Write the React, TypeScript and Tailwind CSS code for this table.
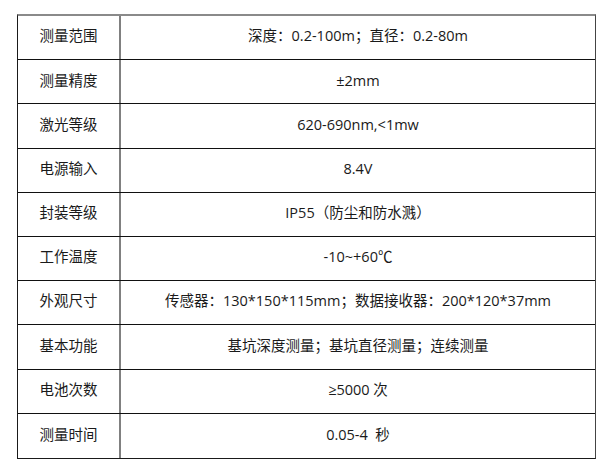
import React from "react";

const rows: [string, string][] = [
  ["测量范围", "深度：0.2-100m；直径：0.2-80m"],
  ["测量精度", "±2mm"],
  ["激光等级", "620-690nm,<1mw"],
  ["电源输入", "8.4V"],
  ["封装等级", "IP55（防尘和防水溅）"],
  ["工作温度", "-10~+60℃"],
  ["外观尺寸", "传感器：130*150*115mm；数据接收器：200*120*37mm"],
  ["基本功能", "基坑深度测量；基坑直径测量；连续测量"],
  ["电池次数", "≥5000 次"],
  ["测量时间", "0.05-4  秒"],
];

export default function App() {
  return (
    <div
      className="w-[614px] h-[474px] bg-white pt-[14px] pl-[17px]"
      style={{ fontFamily: '"Open Sans", "Noto Sans CJK SC", sans-serif' }}
    >
      <div className="w-[579px] border-t-2 border-t-[#8a8a8a] border-l border-l-[#1a1a1a] border-r border-r-[#444] border-b border-b-[#1a1a1a]">
        {rows.map(([k, v], i) => (
          <div
            key={i}
            className={`flex h-[44.2px] text-[14.5px] leading-none text-[#1a1a1a] ${i < rows.length - 1 ? "border-b border-b-[#111]" : ""}`}
          >
            <div className="w-[103px] flex items-center justify-center border-r-2 border-r-[#808080] whitespace-pre pb-[2px]">
              {k}
            </div>
            <div className="flex-1 flex items-center justify-center whitespace-pre pb-[2px]">{v}</div>
          </div>
        ))}
      </div>
    </div>
  );
}
